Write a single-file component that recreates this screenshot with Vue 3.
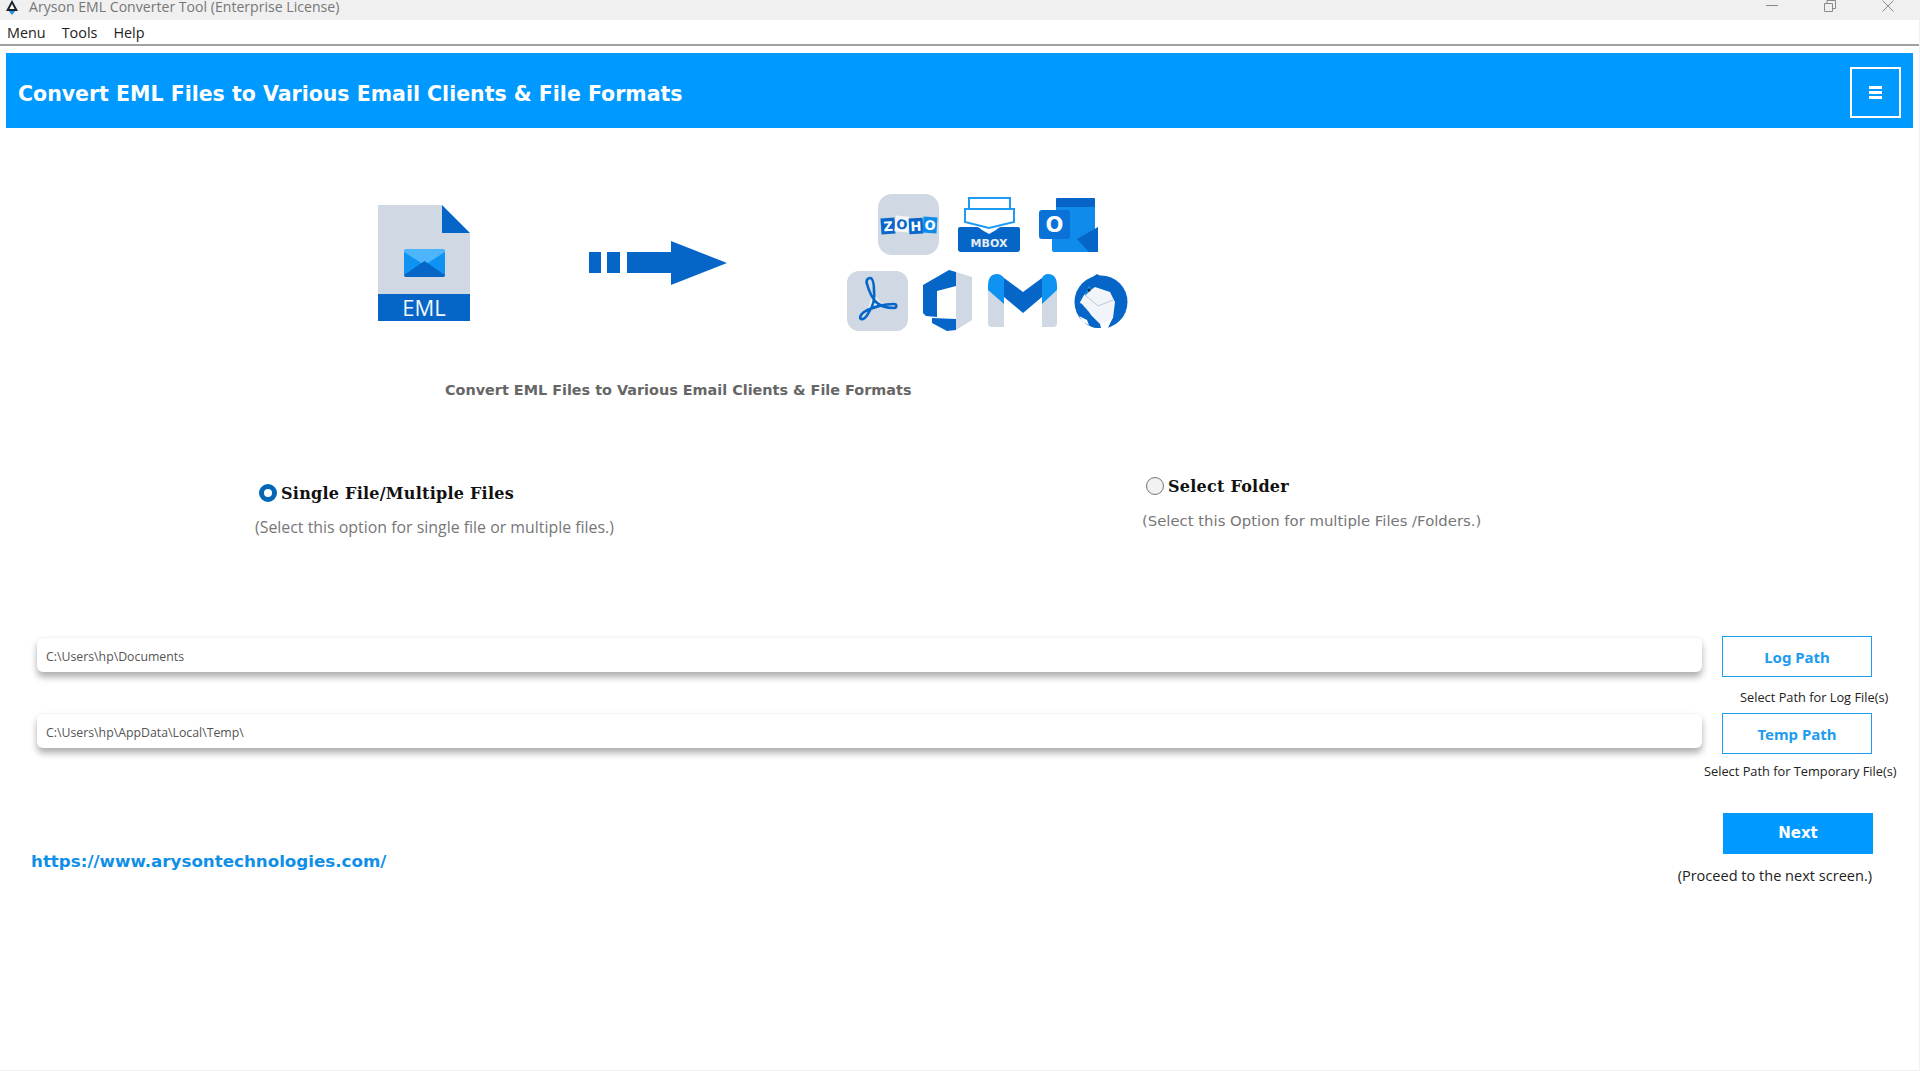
<script setup>
import { ref } from 'vue';

const source = ref('files');

const paths = [
  { value: 'C:\\Users\\hp\\Documents', button: 'Log Path', hint: 'Select Path for Log File(s)', hintClass: 'path-hint--log' },
  { value: 'C:\\Users\\hp\\AppData\\Local\\Temp\\', button: 'Temp Path', hint: 'Select Path for Temporary File(s)', hintClass: 'path-hint--temp' },
];

const zohoTiles = [
  { x: 3, y: 24, fill: '#0a66c8', letter: 'Z', tilt: -4 },
  { x: 17, y: 22, fill: '#f4f7fa', letter: 'O', dark: true, tilt: 5 },
  { x: 31, y: 24, fill: '#0a66c8', letter: 'H', tilt: -3 },
  { x: 45, y: 23, fill: '#0d8cec', letter: 'O', tilt: 4 },
];
</script>

<template>
  <div class="app">
    <div class="titlebar">
      <svg class="app-logo" viewBox="0 0 14 15" width="14" height="15">
        <path d="M3 10h8l-4 5z" fill="#1d8fe0" />
        <path d="M7 0l6 11H1z" fill="#1b2430" />
        <path d="M7 4l2.6 5H4.400z" fill="#fff" />
      </svg>
      <span class="title-text">Aryson EML Converter Tool (Enterprise License)</span>
      <div class="window-controls">
        <svg viewBox="0 0 12 12" width="12" height="12"><path d="M0 5.500h12" stroke="#8a8a8a" fill="none" /></svg>
        <svg viewBox="0 0 12 12" width="12" height="12"><path d="M.5 3.500h8v8h-8zM3 3.500V.5h8.500v8H8.500" stroke="#8a8a8a" fill="none" /></svg>
        <svg viewBox="0 0 12 12" width="12" height="12"><path d="M.5.5l11 11M11.500.5l-11 11" stroke="#8a8a8a" fill="none" /></svg>
      </div>
    </div>

    <nav class="menubar">
      <span>Menu</span>
      <span>Tools</span>
      <span>Help</span>
    </nav>

    <header class="banner">
      <h1>Convert EML Files to Various Email Clients &amp; File Formats</h1>
      <button class="banner-menu" type="button" aria-label="Menu">
        <span></span><span></span><span></span>
      </button>
    </header>

    <section class="hero">
      <svg class="file-icon" viewBox="0 0 92 117" width="92" height="117">
        <path d="M0 0h64v28h28v62H0z" fill="#cfd8e3" />
        <path d="M64 0l28 28H64z" fill="#0566c8" />
        <path d="M0 89h92v27H0z" fill="#0566c8" />
        <rect x="26" y="44" width="41" height="28" rx="3" fill="#0f93f2" />
        <path d="M26 47q0-3 3-3h35q3 0 3 3l-20.500 13z" fill="#4db5fb" />
        <path d="M26 70q0 2 3 2h35q3 0 3-2L46.500 56z" fill="#0566c8" />
        <text x="46" y="111" class="file-label" text-anchor="middle">EML</text>
      </svg>

      <svg class="arrow-icon" viewBox="0 0 138 44" width="138" height="44">
        <path d="M0 11h12v21H0zM18 11h13v21H18zM38 11h44V0l56 22-56 22V32H38z" fill="#0566c8" />
      </svg>

      <div class="apps">
        <div class="apps-row apps-row--top">
          <svg viewBox="0 0 61 61" width="61" height="61">
            <rect width="61" height="61" rx="14" fill="#cfd8e3" />
            <g v-for="tile in zohoTiles" :key="tile.x" :transform="`rotate(${tile.tilt} ${tile.x + 7} ${tile.y + 8})`">
              <rect :x="tile.x" :y="tile.y" width="14" height="16" :fill="tile.fill" />
              <text :x="tile.x + 7" :y="tile.y + 13" class="zoho-letter" text-anchor="middle" :fill="tile.dark ? '#0a66c8' : '#fff'">{{ tile.letter }}</text>
            </g>
          </svg>

          <svg viewBox="0 0 62 55" width="62" height="55">
            <path d="M11 11V1h41v10" fill="none" stroke="#1e9af5" stroke-width="2" />
            <path d="M7 25V12h49v13L31 31z" fill="none" stroke="#1e9af5" stroke-width="2" />
            <path d="M0 32q0-2 2-2h17q2 0 5 3l7 4 7-4q3-3 5-3h17q2 0 2 2v20q0 3-3 3H3q-3 0-3-3z" fill="#0566c8" />
            <text x="31" y="50" class="mbox-label" text-anchor="middle">MBOX</text>
          </svg>

          <svg viewBox="0 0 59 55" width="59" height="55">
            <rect x="17" y="1" width="39" height="10" rx="1" fill="#0763c5" />
            <rect x="17" y="10" width="39" height="22" fill="#0f8ceb" />
            <path d="M13 32h45v23H15q-2 0-2-2z" fill="#0f8ceb" />
            <path d="M59 30v25H50L38 42z" fill="#0566c8" />
            <rect y="13" width="31" height="29" rx="3" fill="#0a72d6" />
            <text x="15.500" y="35" class="outlook-letter" text-anchor="middle">O</text>
          </svg>
        </div>

        <div class="apps-row">
          <svg viewBox="0 0 61 60" width="61" height="60">
            <rect width="61" height="60" rx="12" fill="#cfd8e3" />
            <path d="M26 22l9 11-14 4z" fill="#eaf0f6" />
            <path d="M23 7c-3 0-4 3-3 6 2 7 5 14 9 18 4 4 12 6 18 6 3 0 3-4 0-4-9 0-22 3-30 8-3 2-5 6-3 7 3 1 6-3 8-7 4-6 6-14 5-21 0-6-1-13-4-13z" fill="none" stroke="#0566c8" stroke-width="2.600" />
          </svg>

          <svg viewBox="0 0 50 63" width="50" height="63">
            <path d="M33 3l16 5v43l-16 10z" fill="#cfd8e3" />
            <path d="M0 16L26 1l7 2v14l-19 5v26l-11-1-3-3z" fill="#0566c8" />
            <path d="M9 49l24 1v11l-9 1-15-8z" fill="#0566c8" />
          </svg>

          <svg viewBox="0 0 70 54" width="70" height="54">
            <path d="M0 16l16 13v24H4q-4 0-4-4z" fill="#cfd8e3" />
            <path d="M69 16L54 29v24h11q4 0 4-4z" fill="#cfd8e3" />
            <path d="M16 4l19 14L54 4v19L35 39 16 23z" fill="#0566c8" />
            <path d="M0 12Q0 0 9 0q4 0 7 4v26L0 16z" fill="#0f93f2" />
            <path d="M69 12q0-12-9-12-4 0-6 4v26l15-14z" fill="#0f93f2" />
          </svg>

          <svg viewBox="0 0 56 54" width="56" height="54">
            <circle cx="28" cy="28" r="26.500" fill="#0566c8" />
            <path d="M18 4l6-4 5 3z" fill="#0566c8" />
            <path d="M11 21l11-8 15 5 5 10-2 16-6 9-7-3-12-12-9-8z" fill="#f1f4f8" />
            <path d="M12 21l13 11 15-6" fill="none" stroke="#bcc9d8" />
            <path d="M2 26l7 4 7 8 6 10-7-3-8-8z" fill="#0566c8" />
            <path d="M12 22l6-6-2-5z" fill="#0f93f2" />
            <path d="M6 42l8 4 2 5-6-3z" fill="#fff" />
            <path d="M27 50l12-5-4 9h-7z" fill="#fff" />
            <circle cx="16" cy="16" r="1.500" fill="#1b2430" />
          </svg>
        </div>
      </div>
    </section>

    <p class="hero-caption">Convert EML Files to Various Email Clients &amp; File Formats</p>

    <section class="options">
      <div class="option option--files">
        <label class="option-label">
          <input v-model="source" type="radio" name="source" value="files" />
          <span>Single File/Multiple Files</span>
        </label>
        <p class="option-hint option-hint--files">(Select this option for single file or multiple files.)</p>
      </div>
      <div class="option">
        <label class="option-label">
          <input v-model="source" type="radio" name="source" value="folder" />
          <span>Select Folder</span>
        </label>
        <p class="option-hint">(Select this Option for multiple Files /Folders.)</p>
      </div>
    </section>

    <section class="paths">
      <div v-for="row in paths" :key="row.button" class="path-row">
        <input class="path-input" type="text" readonly :value="row.value" />
        <div class="path-action">
          <button class="path-button" type="button">{{ row.button }}</button>
          <div class="path-hint" :class="row.hintClass">{{ row.hint }}</div>
        </div>
      </div>
    </section>

    <footer class="footer">
      <a class="site-link" href="#">https://www.arysontechnologies.com/</a>
      <div class="next">
        <button class="next-button" type="button">Next</button>
        <div class="next-hint">(Proceed to the next screen.)</div>
      </div>
    </footer>
  </div>
</template>

<style scoped>
.app {
  box-sizing: border-box;
  width: 1920px;
  height: 1071px;
  overflow: hidden;
  background: #fff;
  border-right: 1px solid #f0f0f0;
  border-bottom: 1px solid #f0f0f0;
  font-family: "Open Sans", "Noto Sans", sans-serif;
}

.titlebar {
  display: flex;
  align-items: flex-start;
  height: 20px;
  padding-left: 5px;
  background: #f0f0f0;
  overflow: hidden;
}

.app-logo {
  flex-shrink: 0;
}

.title-text {
  margin-left: 10px;
  font-size: 14.1px;
  line-height: 13px;
  color: #777;
  white-space: nowrap;
}

.window-controls {
  display: flex;
  gap: 46px;
  margin-left: auto;
  margin-right: 25px;
}

.menubar {
  display: flex;
  gap: 16px;
  height: 24px;
  padding-left: 7px;
  border-bottom: 2px solid #a0a0a0;
  font-size: 14.4px;
  line-height: 25px;
  color: #222;
}

.banner {
  display: flex;
  align-items: center;
  justify-content: space-between;
  height: 75px;
  margin: 7px 6px 0 6px;
  padding: 0 12px;
  background: #0099ff;
}

.banner h1 {
  margin: 7px 0 0;
  font-family: "DejaVu Sans", Verdana, sans-serif;
  font-size: 20.5px;
  font-weight: 700;
  color: #fff;
}

.banner-menu {
  display: flex;
  flex-direction: column;
  align-items: center;
  justify-content: center;
  gap: 2px;
  width: 51px;
  height: 51px;
  margin-top: 4px;
  padding: 0;
  background: transparent;
  border: 2px solid #fff;
}

.banner-menu span {
  width: 13px;
  height: 3px;
  background: #fff;
}

.hero {
  display: flex;
  align-items: center;
  padding: 66px 0 0 378px;
}

.file-label {
  font-family: "Open Sans", sans-serif;
  font-size: 22px;
  fill: #f2f6fb;
}

.arrow-icon {
  margin: 0 120px 0 119px;
}

.apps {
  display: flex;
  flex-direction: column;
  gap: 14px;
}

.apps-row {
  display: flex;
  align-items: center;
  gap: 15px;
}

.apps-row--top {
  gap: 19px;
  padding-left: 31px;
}

.zoho-letter {
  font-family: "DejaVu Sans", sans-serif;
  font-size: 13px;
  font-weight: 700;
}

.mbox-label {
  font-family: "DejaVu Sans", sans-serif;
  font-size: 11px;
  font-weight: 700;
  fill: #e6edf5;
}

.outlook-letter {
  font-family: "DejaVu Sans", sans-serif;
  font-size: 21px;
  font-weight: 700;
  fill: #fff;
}

.hero-caption {
  margin: 48px 0 0 445px;
  font-family: "DejaVu Sans", Verdana, sans-serif;
  font-size: 14.4px;
  font-weight: 700;
  line-height: 20px;
  color: #666;
}

.options {
  display: grid;
  grid-template-columns: 887px 1fr;
  height: 62px;
  margin-top: 76px;
  padding-left: 255px;
}

.option--files {
  margin-top: 7px;
}

.option-label {
  display: flex;
  align-items: center;
  gap: 4px;
  height: 20px;
  margin-left: 4px;
  font-family: "DejaVu Serif", "Liberation Serif", serif;
  font-size: 16px;
  font-weight: 700;
  letter-spacing: 0.25px;
  color: #111;
}

.option-label input {
  appearance: none;
  box-sizing: border-box;
  width: 18px;
  height: 18px;
  margin: 0;
  background: #f2f2f2;
  border: 1px solid #777;
  border-radius: 50%;
}

.option-label input:checked {
  background: #fff;
  border: 5px solid #0566b8;
}

.option-hint {
  margin: 15px 0 0;
  font-family: "DejaVu Sans", Verdana, sans-serif;
  font-size: 14.85px;
  line-height: 20px;
  color: #777;
}

.option-hint--files {
  margin-top: 14px;
  font-family: "Open Sans", sans-serif;
  font-size: 15.9px;
}

.paths {
  display: flex;
  flex-direction: column;
  gap: 8px;
  margin-top: 98px;
  padding-left: 37px;
}

.path-row {
  display: flex;
  align-items: flex-start;
  gap: 20px;
}

.path-input {
  box-sizing: border-box;
  width: 1665px;
  height: 35px;
  padding: 2px 9px 0;
  background: #fff;
  border: 0;
  border-top: 1px solid #f4f4f4;
  border-radius: 6px;
  outline: none;
  box-shadow: 0 5px 7px rgba(0, 0, 0, 0.32);
  font-family: "Open Sans", sans-serif;
  font-size: 12.3px;
  color: #555;
}

.path-row:first-child .path-input {
  margin-top: 1px;
}

.path-action {
  width: 150px;
}

.path-button {
  box-sizing: border-box;
  display: block;
  width: 150px;
  height: 41px;
  padding: 1px 0 0;
  background: #fff;
  border: 1px solid #1e9cf0;
  font-family: "Noto Sans", "Open Sans", sans-serif;
  font-size: 15px;
  font-weight: 700;
  color: #1e9cf0;
}

.path-hint {
  font-size: 12.8px;
  line-height: 16px;
  color: #222;
  white-space: nowrap;
}

.path-hint--log {
  margin: 12px 0 0 18px;
}

.path-hint--temp {
  margin: 9px 0 0 -18px;
}

.footer {
  display: flex;
  align-items: flex-start;
  justify-content: space-between;
  margin-top: 34px;
  padding: 0 46px 0 31px;
}

.site-link {
  margin-top: 38px;
  font-family: "DejaVu Sans", Verdana, sans-serif;
  font-size: 16.7px;
  font-weight: 700;
  line-height: 20px;
  color: #0f8fe8;
  text-decoration: none;
}

.next {
  display: flex;
  flex-direction: column;
  align-items: flex-end;
}

.next-button {
  width: 150px;
  height: 41px;
  padding: 0 0 2px;
  background: #0099ff;
  border: 0;
  font-family: "DejaVu Sans", Verdana, sans-serif;
  font-size: 15px;
  font-weight: 700;
  color: #fff;
}

.next-hint {
  margin: 11px 1px 0 0;
  font-size: 14.55px;
  line-height: 20px;
  color: #222;
}
</style>
